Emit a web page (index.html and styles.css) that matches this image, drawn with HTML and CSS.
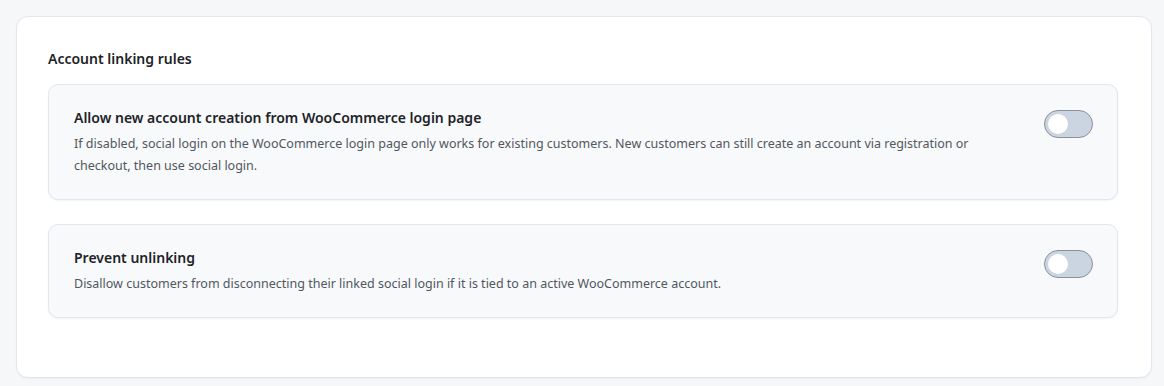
FILE: index.html
```html
<!DOCTYPE html>
<html>
<head>
<meta charset="utf-8">
<link rel="stylesheet" href="styles.css">
</head>
<body>
<div class="panel">
  <h2 class="section-title">Account linking rules</h2>
  <div class="rules">
    <div class="rule">
      <div class="rule-text">
        <div class="rule-title">Allow new account creation from WooCommerce login page</div>
        <div class="rule-desc">If disabled, social login on the WooCommerce login page only works for existing customers. New customers can still create an account via registration or checkout, then use social login.</div>
      </div>
      <span class="toggle"><span class="knob"></span></span>
    </div>
    <div class="rule">
      <div class="rule-text">
        <div class="rule-title">Prevent unlinking</div>
        <div class="rule-desc">Disallow customers from disconnecting their linked social login if it is tied to an active WooCommerce account.</div>
      </div>
      <span class="toggle"><span class="knob"></span></span>
    </div>
  </div>
</div>
</body>
</html>
```
FILE: styles.css
```css
* { box-sizing: border-box; }
html, body { margin: 0; }
body {
  background: #f6f7f9;
  padding: 16px 12px 8px 16px;
  font-family: "Noto Sans", "Open Sans", sans-serif;
}
.panel {
  background: #ffffff;
  border: 1px solid #e2e6ee;
  border-radius: 12px;
  padding: 31px 33px 59px 31px;
  box-shadow: 0 1px 2px rgba(16, 24, 40, 0.04);
}
.section-title {
  margin: 0 0 14px 0;
  font-size: 14px;
  line-height: 22px;
  font-weight: 600;
  color: #1d2327;
}
.rules {
  display: flex;
  flex-direction: column;
  gap: 24px;
}
.rule {
  display: flex;
  align-items: flex-start;
  gap: 40px;
  background: #f8f9fb;
  border: 1px solid #e2e6ee;
  border-radius: 10px;
  padding: 22px 24px 22px 25px;
  box-shadow: 0 1px 2px rgba(16, 24, 40, 0.05);
}
.rule-text { flex: 1; }
.rule-title {
  font-size: 14px;
  line-height: 22px;
  font-weight: 600;
  color: #1d2327;
  margin-bottom: 4px;
}
.rule-desc {
  font-size: 12.5px;
  line-height: 22px;
  color: #50575e;
}
.toggle {
  flex: none;
  width: 49px;
  height: 28px;
  margin-top: 3px;
  border-radius: 14px;
  background: #cbd5e1;
  border: 1px solid #8c9096;
  display: flex;
  align-items: center;
  padding-left: 3px;
}
.knob {
  width: 20px;
  height: 20px;
  border-radius: 50%;
  background: #ffffff;
}
```
